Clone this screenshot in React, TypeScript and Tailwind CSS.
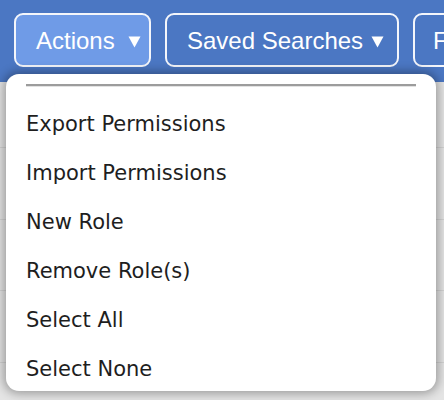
import React from "react";

function Tri({ ml }: { ml: string }) {
  return (
    <svg width="13" height="12" viewBox="0 0 13 12" className={ml + " mt-[2px] shrink-0"}>
      <polygon points="0.5,0.5 12.5,0.5 6.5,11.5" fill="white" />
    </svg>
  );
}

export default function App() {
  const items = [
    "Export Permissions",
    "Import Permissions",
    "New Role",
    "Remove Role(s)",
    "Select All",
    "Select None",
  ];
  return (
    <div className="relative w-[444px] h-[400px] overflow-hidden bg-[#e4e4e4]">
      <div className="h-[82px] bg-[#4b77c3] flex items-start gap-[14px] pl-[14px] pt-[13px] overflow-hidden">
        <div className="shrink-0 w-[137px] h-[54px] rounded-[9px] border-2 border-[#f4f6fb] bg-[#6f9be7] flex items-center pl-[20px] pt-[2px] text-white text-[24px] font-['Liberation_Sans',Arial,sans-serif]">
          Actions
          <Tri ml="ml-[13px]" />
        </div>
        <div className="shrink-0 w-[234px] h-[54px] rounded-[9px] border-2 border-[#f4f6fb] flex items-center pl-[20px] pt-[2px] text-white text-[24px] font-['Liberation_Sans',Arial,sans-serif]">
          Saved Searches
          <Tri ml="ml-[8px]" />
        </div>
        <div className="shrink-0 w-[120px] h-[54px] rounded-[9px] border-2 border-[#f4f6fb] flex items-center pl-[18px] pt-[2px] text-white text-[24px] font-['Liberation_Sans',Arial,sans-serif]">
          <span className="whitespace-nowrap">F</span>
        </div>
      </div>
      <div className="flex flex-col">
        <div className="h-[66px] border-b border-[#d2d2d2]" />
        <div className="h-[72px] border-b border-[#d2d2d2]" />
        <div className="h-[71px] border-b border-[#d2d2d2]" />
        <div className="h-[72px] border-b border-[#d2d2d2]" />
      </div>
      <div className="absolute left-[6px] top-[74px] w-[430px] h-[317px] bg-white rounded-[13px] shadow-[0_0_10px_3px_rgba(0,0,0,0.3)] font-['DejaVu_Sans',Verdana,sans-serif] text-[#1e1e1e]">
        <div className="mx-[20px] mt-[10px] h-[3px] border-t-2 border-[#9c9c9c] border-b border-b-[#e2e2e2]" />
        <div className="flex flex-col pt-[13px]">
          {items.map((t) => (
            <div key={t} className="h-[49px] flex items-center pl-[20px] text-[21px]">
              {t}
            </div>
          ))}
        </div>
      </div>
    </div>
  );
}
